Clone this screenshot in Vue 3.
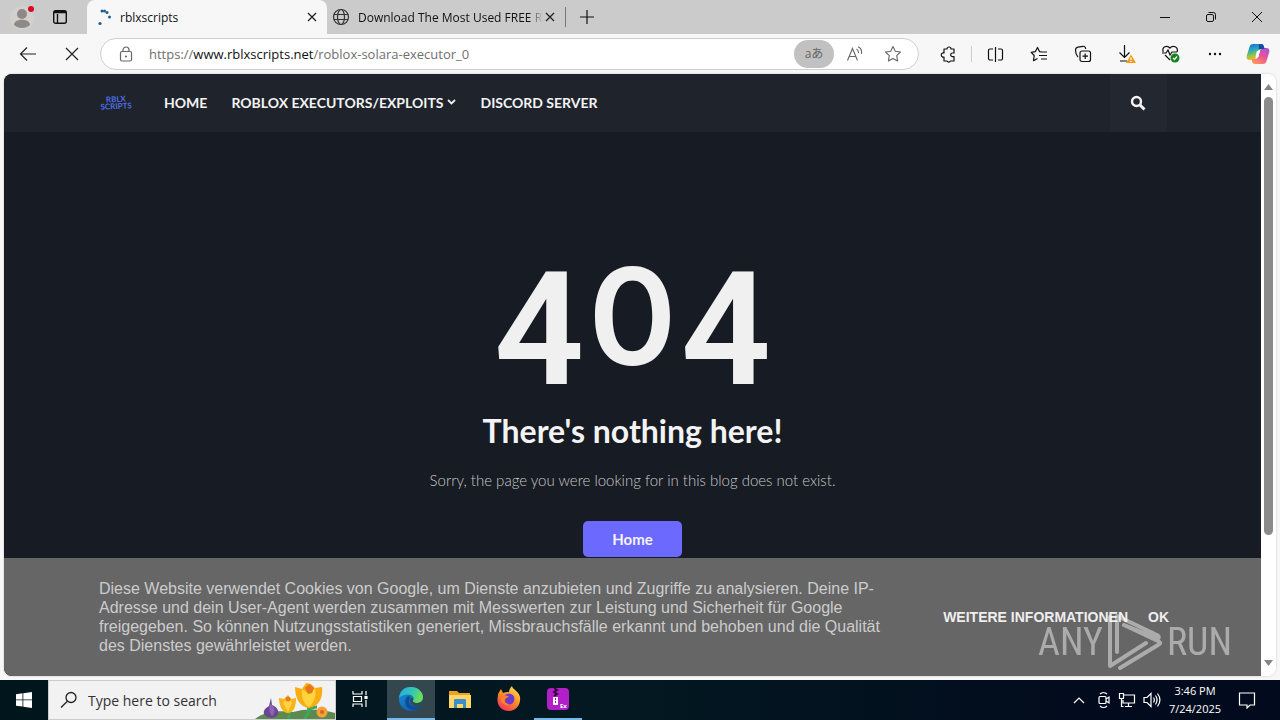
<script setup>
import { ref } from 'vue'

const address = ref('https://www.rblxscripts.net/roblox-solara-executor_0')
const query = ref('')
</script>

<template>
  <div class="desktop">
    <header class="tabs">
      <button class="profile" aria-label="Profile">
        <svg width="26" height="26" viewBox="0 0 26 26">
          <circle cx="13" cy="14" r="12" fill="#d3d0ce" />
          <circle cx="13" cy="10" r="5" fill="#8c8986" />
          <path d="M5 21c0-7 16-7 16 0-4 4-12 4-16 0z" fill="#8c8986" />
          <circle cx="22" cy="5" r="3" fill="#d60b20" />
        </svg>
      </button>
      <button class="workspaces" aria-label="Tab actions">
        <svg width="16" height="16" viewBox="0 0 16 16" fill="none" stroke="#111" stroke-width="1.4">
          <rect x="1.700" y="1.700" width="12.600" height="12.600" rx="2" />
          <path d="M2 3.500h12M5.500 5v9" />
          <path d="M2 2.600h12" stroke-width="2" />
        </svg>
      </button>
      <div class="tab active">
        <svg width="18" height="18" viewBox="0 0 18 18" fill="#1d5f91">
          <circle cx="8" cy="3" r="1.500" /><circle cx="10.500" cy="3" r="1.500" /><circle cx="13" cy="4.500" r="1.500" />
          <circle cx="15.500" cy="9" r="1.500" /><circle cx="6" cy="15.500" r="1.600" />
        </svg>
        <span class="tab-title">rblxscripts</span>
        <button class="tab-close" aria-label="Close tab">
          <svg width="10" height="10" viewBox="0 0 10 10" stroke="#222" stroke-width="1.300"><path d="M1 1l8 8M9 1l-8 8" /></svg>
        </button>
      </div>
      <div class="tab other">
        <svg width="18" height="18" viewBox="0 0 18 18" fill="none" stroke="#333" stroke-width="1.200">
          <circle cx="9" cy="9" r="7.500" /><ellipse cx="9" cy="9" rx="3.500" ry="7.500" /><path d="M2 6.500h14M2 11.500h14" />
        </svg>
        <span class="tab-title fade">Download The Most Used FREE R</span>
        <button class="tab-close" aria-label="Close tab">
          <svg width="10" height="10" viewBox="0 0 10 10" stroke="#222" stroke-width="1.300"><path d="M1 1l8 8M9 1l-8 8" /></svg>
        </button>
      </div>
      <button class="new-tab" aria-label="New tab">
        <svg width="14" height="14" viewBox="0 0 14 14" stroke="#111" stroke-width="1.200"><path d="M7 0v14M0 7h14" /></svg>
      </button>
      <div class="window-buttons">
        <button aria-label="Minimize"><svg width="12" height="12" viewBox="0 0 12 12" stroke="#111"><path d="M1 6.500h10" /></svg></button>
        <button aria-label="Restore">
          <svg width="12" height="12" viewBox="0 0 12 12" fill="none" stroke="#111">
            <rect x="1.500" y="3.500" width="7" height="7" rx="1.500" /><path d="M3.500 1.500h5a2 2 0 0 1 2 2v5" />
          </svg>
        </button>
        <button aria-label="Close"><svg width="12" height="12" viewBox="0 0 12 12" stroke="#111"><path d="M1 1l10 10M11 1L1 11" /></svg></button>
      </div>
    </header>

    <div class="toolbar">
      <button class="tool" aria-label="Back">
        <svg width="18" height="16" viewBox="0 0 18 16" fill="none" stroke="#222" stroke-width="1.200"><path d="M17 8H2M8 1.500L1.500 8 8 14.500" /></svg>
      </button>
      <button class="tool stop" aria-label="Stop">
        <svg width="14" height="14" viewBox="0 0 14 14" stroke="#222" stroke-width="1.200"><path d="M1 1l12 12M13 1L1 13" /></svg>
      </button>
      <div class="address">
        <svg width="14" height="16" viewBox="0 0 14 16" fill="none" stroke="#666" stroke-width="1.200">
          <rect x="1.500" y="5.500" width="11" height="9.500" rx="1.500" /><path d="M4 5.500V4a3 3 0 0 1 6 0v1.500" /><circle cx="7" cy="10.500" r=".5" fill="#666" />
        </svg>
        <label class="url">
          <span class="url-text" aria-hidden="true">https://<b>www.rblxscripts.net</b>/roblox-solara-executor_0</span>
          <input v-model="address" type="text" aria-label="Address" />
        </label>
        <button class="translate" aria-label="Translate">aあ</button>
        <button class="tool" aria-label="Read aloud">
          <svg width="18" height="16" viewBox="0 0 18 16" fill="none" stroke="#666" stroke-width="1.100">
            <path d="M1.500 14.500L6.500 2.500l5 12M3 10.500h7M10.500 3c1.500.8 2 2 2 4M12 .800c3 1.200 4 4 3.500 7" />
          </svg>
        </button>
        <button class="tool" aria-label="Add to favorites">
          <svg width="18" height="18" viewBox="0 0 18 18" fill="none" stroke="#666" stroke-width="1.100" stroke-linejoin="round">
            <path d="M9 1.500l2.300 4.800 5.200.7-3.800 3.600.9 5.300L9 13.400l-4.600 2.500.9-5.300L1.500 7l5.200-.7z" />
          </svg>
        </button>
      </div>
      <nav class="tools" aria-label="Browser tools">
        <button class="tool" aria-label="Extensions">
          <svg width="17" height="17" viewBox="0 0 17 17" fill="none" stroke="#111" stroke-width="1.200" stroke-linejoin="round">
            <path d="M4 3h3a2 2 0 0 1 4 0h3v4h-1.500a1.800 1.800 0 0 0 0 3.600H14V15h-3.500a2 2 0 0 1-3.500 0H4v-4a2.100 2.100 0 1 1 0-4z" />
          </svg>
        </button>
        <i class="rule"></i>
        <button class="tool" aria-label="Split screen">
          <svg width="17" height="17" viewBox="0 0 17 17" fill="none" stroke="#111" stroke-width="1.200">
            <path d="M6 3H3a1.500 1.500 0 0 0-1.500 1.500v8A1.500 1.500 0 0 0 3 14h3M11 3h3a1.500 1.500 0 0 1 1.500 1.500v8A1.500 1.500 0 0 1 14 14h-3M8.500 1v15" />
          </svg>
        </button>
        <button class="tool" aria-label="Favorites">
          <svg width="18" height="17" viewBox="0 0 18 17" fill="none" stroke="#111" stroke-width="1.200" stroke-linejoin="round">
            <path d="M12 6l-2.500-.4L7.500 1.500 5.400 5.600 1.200 6.400l3 3.100-.7 5.200 4-2.200M11 6h6M9 9.500h8M11 13h6" />
          </svg>
        </button>
        <button class="tool" aria-label="Collections">
          <svg width="18" height="18" viewBox="0 0 18 18" fill="none" stroke="#111" stroke-width="1.200">
            <rect x="6" y="6" width="10.500" height="10.500" rx="2" /><path d="M11.200 8.500v5.500M8.500 11.200H14M4 12C2 10 1.500 7 1.500 5c0-2 1-2.500 2.500-2.800l5-.9c1.500-.2 2.500.7 2.700 2.700" />
          </svg>
        </button>
        <button class="tool" aria-label="Downloads">
          <svg width="20" height="20" viewBox="0 0 20 20" fill="none" stroke="#111" stroke-width="1.200">
            <path d="M7.500 1v12M2.500 8.500l5 5 5-5M3 17h7" />
            <path d="M14 10.500l5 8.500H9z" fill="#f59b14" stroke="none" /><path d="M14 13.500v2.700M14 17v1" stroke="#fff" />
          </svg>
        </button>
        <button class="tool" aria-label="Browser essentials">
          <svg width="20" height="20" viewBox="0 0 20 20" fill="none" stroke="#111" stroke-width="1.200">
            <path d="M2.200 8C.5 3 6 .5 9 4c3-3.500 8.500-1 7.200 4M1 9h4l2-3 2 5 2-3h5M4 11l5 5" />
            <circle cx="14" cy="14" r="4.500" fill="#15831f" stroke="none" /><path d="M12 14l1.500 1.500 2.500-3" stroke="#fff" />
          </svg>
        </button>
        <button class="tool" aria-label="Settings and more">
          <svg width="16" height="4" viewBox="0 0 16 4" fill="#111"><circle cx="3" cy="2" r="1.200" /><circle cx="8" cy="2" r="1.200" /><circle cx="13" cy="2" r="1.200" /></svg>
        </button>
        <button class="tool copilot" aria-label="Copilot">
          <svg width="24" height="22" viewBox="0 0 24 22">
            <defs>
              <linearGradient id="cpA" x2="0.300" y2="1"><stop stop-color="#1767d7" /><stop offset=".45" stop-color="#28aeba" /><stop offset=".75" stop-color="#9ac53d" /><stop offset="1" stop-color="#f4bd22" /></linearGradient>
              <linearGradient id="cpB" x1="1" x2="0.300" y2="1"><stop stop-color="#9d58dc" /><stop offset=".5" stop-color="#e6519c" /><stop offset="1" stop-color="#ff935e" /></linearGradient>
            </defs>
            <path d="M7 1h8c2 0 2.500 1 3 3l.6 2H15c-2 0-3 1-3.500 3L10 14c-.5 2-1.500 3-3 3H4c-3 0-4-2-3-5L3.500 4C4 2 5 1 7 1z" fill="url(#cpA)" />
            <path d="M17 21H9c-2 0-2.500-1-3-3l-.5-2H9c2 0 3-1 3.500-3L14 8c.5-2 1.500-3 3-3h3c3 0 4 2 3 5l-2.500 8c-.5 2-1.500 3-3.500 3z" fill="url(#cpB)" />
            <path d="M13 1h2c2 0 2.500 1 3 3l.6 2H15c-1 0-1.700.3-2.200 1z" fill="#124ba4" />
            <path d="M10.800 8h3l-1.600 6H9.500z" fill="#fff" />
          </svg>
        </button>
      </nav>
    </div>

    <div class="frame">
      <div class="viewport">
        <div class="site-header">
          <div class="site-inner">
            <a class="logo" href="#"><span>RBLX</span><span>SCRIPTS</span></a>
            <nav class="menu" aria-label="Main">
              <a href="#">HOME</a>
              <a href="#">ROBLOX EXECUTORS/EXPLOITS
                <svg width="9" height="6" viewBox="0 0 9 6" fill="none" stroke="#eee" stroke-width="1.800"><path d="M1 1l3.500 3.500L8 1" /></svg>
              </a>
              <a href="#">DISCORD SERVER</a>
            </nav>
            <button class="search" aria-label="Search">
              <svg width="16" height="16" viewBox="0 0 16 16" fill="none" stroke="#f3f3f3"><circle cx="6.500" cy="6.500" r="4.500" stroke-width="2.400" /><path d="M10 10l4.500 4.500" stroke-width="3" /></svg>
            </button>
          </div>
        </div>
        <main class="error">
          <h1 class="code"><span>4</span><span class="zero">0</span><span>4</span></h1>
          <h2>There's nothing here!</h2>
          <p>Sorry, the page you were looking for in this blog does not exist.</p>
          <a class="home" href="#">Home</a>
        </main>
        <section class="cookies" aria-label="Cookies">
          <p>Diese Website verwendet Cookies von Google, um Dienste anzubieten und Zugriffe zu analysieren. Deine IP-Adresse und dein User-Agent werden zusammen mit Messwerten zur Leistung und Sicherheit für Google freigegeben. So können Nutzungsstatistiken generiert, Missbrauchsfälle erkannt und behoben und die Qualität des Dienstes gewährleistet werden.</p>
          <div class="cookie-links"><a href="#">WEITERE INFORMATIONEN</a><a href="#">OK</a></div>
        </section>
      </div>
      <div class="scrollbar">
        <svg width="9" height="6" viewBox="0 0 9 6" fill="#858585"><path d="M0 6l4.500-6L9 6z" /></svg>
        <i class="thumb"></i>
        <svg width="9" height="6" viewBox="0 0 9 6" fill="#858585"><path d="M0 0l4.500 6L9 0z" /></svg>
      </div>
    </div>

    <div class="watermark">
      <span>ANY</span>
      <svg width="56" height="60" viewBox="0 0 56 60" fill="none" stroke="#fff" stroke-width="4" stroke-linecap="round" stroke-linejoin="round">
        <path d="M10 40V4l40 19c3 2 2 4-1 3L17 13M3 5v49l36-23M17 13l34 16c3 1.500 3 2.500 0 4L13 56" />
      </svg>
      <span>RUN</span>
    </div>

    <footer class="taskbar">
      <button class="start" aria-label="Start">
        <svg width="16" height="16" viewBox="0 0 16 16" fill="#fff"><path d="M0 2.200l6.500-.9v6.200H0zM7.300 1.200L16 0v7.500H7.300zM0 8.300h6.500v6.300L0 13.700zM7.300 8.300H16V16l-8.700-1.200z" /></svg>
      </button>
      <label class="task-search">
        <svg width="18" height="18" viewBox="0 0 18 18" fill="none" stroke="#222" stroke-width="1.300"><circle cx="11" cy="6.500" r="5" /><path d="M7.400 10.200L1 16.500" /></svg>
        <input v-model="query" type="text" placeholder="Type here to search" aria-label="Search Windows" />
        <svg class="flowers" width="80" height="38" viewBox="0 0 80 38">
          <path d="M0 38c8-7 24-9 38-7 14-4 28-3 42 1v6z" fill="#5b8a4e" />
          <path d="M16 17l1 7c6 2 8 8 5 11-4 3-11 2-13-2-1-4 2-6 5-8z" fill="#6b4592" /><path d="M15 23c-1 5-1 9 2 12 4-3 3-8 0-11z" fill="#8c64b4" />
          <path d="M33 28c2 4 1 8 1 10M53 25c2 5 0 9-4 13M52 31c3-4 7-5 10-5" stroke="#3fa45c" stroke-width="3" fill="none" />
          <path d="M24 17l5 1 4-4 3 4 5-1c0 8-2 15-8 15-6 0-9-8-9-15z" fill="#f7b416" /><path d="M33 15l4 7-4 9-5-9z" fill="#ffd245" />
          <circle cx="33" cy="18" r="2.500" fill="#e9791f" />
          <path d="M40 6l7 2 4-6 5 1 4 4 7-1c1 8-1 19-13 21-10-1-14-11-14-21z" fill="#f8ae10" /><path d="M47 8l7 5 6-6c2 9-2 16-6 19-5-3-8-9-7-18z" fill="#ffd53e" />
          <path d="M50 7l4-4 5 4-2 5-4 1z" fill="#e8741e" />
          <circle cx="67" cy="31" r="5.500" fill="#f5a13a" /><circle cx="67" cy="31" r="2" fill="#d9641c" />
        </svg>
      </label>
      <button class="task" aria-label="Task view">
        <svg width="18" height="18" viewBox="0 0 18 18" fill="none" stroke="#fff" stroke-width="1.200">
          <path d="M2 1v3h9V1M2 17v-3h9v3M2.500 6.500h8v5h-8zM15 1v4M15 10v7" /><rect x="14" y="6.500" width="2" height="2" fill="#fff" />
        </svg>
      </button>
      <button class="task current" aria-label="Microsoft Edge">
        <svg width="26" height="26" viewBox="0 0 26 26">
          <defs>
            <linearGradient id="eg1" y2=".3"><stop stop-color="#27a8e5" /><stop offset=".6" stop-color="#32c8b4" /><stop offset="1" stop-color="#6ddc58" /></linearGradient>
            <linearGradient id="eg2" y2="1"><stop stop-color="#1693dc" /><stop offset="1" stop-color="#0d4da3" /></linearGradient>
          </defs>
          <circle cx="13" cy="13" r="12" fill="url(#eg2)" />
          <path d="M1 12C2 4 7 1 13 1c7 0 12 5 12 10 0 4-3 6-6 6-3 0-5-1-4-2.500 2-3-1-6-5-6-4 0-7 1.500-9 3.500z" fill="url(#eg1)" />
          <path d="M10 10c-4 3-4 10 2 13 4 2 8 1 11-3-6 2-12 0-12-5 0-2 1-3 1-4z" fill="#0f4c98" />
          <path d="M15 14c-1 2 1 3 4 3 2 0 4-1 5-2l1 3c-1 1-2 2-4 2-5 1-9-2-9-5 0-2 1-3 2-3 1 0 1.500 1 1 2z" fill="#35474f" />
        </svg>
      </button>
      <button class="task" aria-label="File Explorer">
        <svg width="24" height="22" viewBox="0 0 24 22">
          <path d="M1 3h8l2 2h11v14H1z" fill="#e9a323" /><path d="M1 7h22v13H1z" fill="#ffd767" />
          <path d="M6 12c0-1 1-1 1-1h10s1 0 1 1v8h-3v-4H9v4H6z" fill="#3c8dcc" />
        </svg>
      </button>
      <button class="task" aria-label="Firefox">
        <svg width="26" height="26" viewBox="0 0 26 26">
          <defs><linearGradient id="ff" x1=".8" x2=".2" y2="1"><stop stop-color="#ffe14a" /><stop offset=".5" stop-color="#ff8a25" /><stop offset="1" stop-color="#ef2d62" /></linearGradient></defs>
          <path d="M2 8l3-5 2 4c2-1 4-1 6-1 0-2 1-4 3-6 0 3 7 5 8 11 1 8-4 14-11 14S1 20 1.500 13c0-2 .5-3 .5-5z" fill="url(#ff)" />
          <circle cx="13" cy="13" r="5.500" fill="#7139c9" /><path d="M5 9c3-1 4 1 8 1-1 2-3 1-4 4-1 2 2 4 5 4-5 3-10-1-9-9z" fill="#ff8425" />
        </svg>
      </button>
      <button class="task open" aria-label="Archive tool">
        <svg width="24" height="24" viewBox="0 0 24 24">
          <rect x="1" y="1" width="22" height="22" rx="4" fill="#b21fc8" /><path d="M8 1l3 2-3 2 3 2-3 2" stroke="#33093c" stroke-width="2" fill="none" />
          <rect x="7" y="10" width="5" height="8" fill="#fff" /><path d="M9 12h1M9 15h1" stroke="#9410aa" stroke-width="2" />
          <text x="14" y="21" fill="#fff" font-size="6" font-weight="700">Ex</text>
        </svg>
      </button>
      <div class="tray">
        <svg width="12" height="8" viewBox="0 0 12 8" fill="none" stroke="#fff" stroke-width="1.200"><path d="M1 7l5-5 5 5" /></svg>
        <svg width="14" height="18" viewBox="0 0 14 18" fill="none" stroke="#fff" stroke-width="1.200"><rect x="2" y="5.500" width="7" height="7" rx="1" /><path d="M9 8l3-2v6l-3-2M3 3c2-2 5-2 7 0M3 15c2 2 5 2 7 0" /></svg>
        <svg width="18" height="16" viewBox="0 0 18 16" fill="none" stroke="#fff" stroke-width="1.200"><path d="M6 3h10.500v8H5V8M10.500 11v3M7 14.500h7M1.500 1.500h4v5h-4zM3.500 6.500v8h2" /></svg>
        <svg width="18" height="16" viewBox="0 0 18 16" fill="none" stroke="#fff" stroke-width="1.200"><path d="M1 5.500h3l4-4v13l-4-4H1zM10.500 5.500c1 1.500 1 3.500 0 5M12.500 3.500c2 3 2 6 0 9M14.500 1.500c3 4 3 9 0 13" /></svg>
        <time class="clock"><span>3:46 PM</span><span>7/24/2025</span></time>
        <svg class="note" width="18" height="18" viewBox="0 0 18 18" fill="none" stroke="#fff" stroke-width="1.200"><path d="M1.500 2h15v12H12l-3 3v-3H1.500z" /></svg>
      </div>
    </footer>
  </div>
</template>

<style>
body { margin: 0; }
</style>

<style scoped>
* { box-sizing: border-box; }
.desktop { position: relative; display: flex; flex-direction: column; height: 100vh; overflow: hidden; background: #f7f7f7; font-family: "Open Sans", "Noto Sans", "Noto Sans CJK JP", sans-serif; }
button { display: flex; align-items: center; justify-content: center; border: 0; padding: 0; background: none; font: inherit; }
svg { display: block; flex: none; }
a { color: inherit; text-decoration: none; }
h1, h2, p { margin: 0; }

.tabs { display: flex; align-items: center; height: 34px; flex: none; padding-left: 9px; background: #cbcbcb; }
.workspaces { margin: 0 19px 0 17px; }
.tab { display: flex; align-items: center; height: 34px; font-size: 12px; color: #111; }
.active { width: 240px; padding: 0 9px 0 7px; border-radius: 8px 8px 0 0; background: #f7f7f7; }
.other { width: 238px; padding: 0 9px 0 5px; }
.tab-title { flex: 1; margin: 0 1px 0 8px; overflow: hidden; white-space: nowrap; }
.fade { mask-image: linear-gradient(90deg, #000 92%, transparent); }
.tab-close { width: 12px; height: 20px; }
.new-tab { height: 20px; padding: 0 14px; border-left: 1px solid #777; }
.window-buttons { display: flex; margin-left: auto; }
.window-buttons button { width: 46px; height: 34px; }

.toolbar { display: flex; align-items: center; height: 40px; flex: none; padding-left: 11px; }
.tool { width: 34px; height: 30px; flex: none; }
.stop { margin: 0 11px 0 10px; }
.address { display: flex; align-items: center; flex: 1; height: 32px; padding: 0 8px 0 18px; gap: 4px; border: 1px solid #cfcfcf; border-radius: 16px; background: #fff; }
.url { position: relative; flex: 1; margin-left: 12px; font-size: 13px; color: #707070; line-height: 20px; }
.url-text { white-space: nowrap; }
.url b { font-weight: 400; color: #111; }
.url input { position: absolute; inset: 0; width: 100%; border: 0; padding: 0; background: none; font: inherit; color: transparent; }
.translate { width: 40px; height: 28px; border-radius: 14px; background: #c1c1c1; color: #666; font-size: 12px; line-height: 16px; }
.tools { display: flex; align-items: center; gap: 10px; padding: 0 5px 0 12px; }
.rule { width: 1px; height: 16px; margin: 0 -4px 0 -4px; background: #ccc; }
.copilot { margin-left: -1px; }

.frame { display: flex; flex: 1; min-height: 0; margin: 0 4px 4px; overflow: hidden; border-radius: 8px; background: #fff; box-shadow: 0 0 2px #bbb; }
.viewport { display: flex; flex-direction: column; flex: 1; background: #171b23; color: #f3f3f3; font-family: Lato, sans-serif; }
.site-header { flex: none; height: 58px; padding: 0 94px; background: #1f232b; }
.site-inner { display: flex; align-items: center; height: 58px; }
.logo { display: flex; flex-direction: column; align-items: center; width: 36px; color: #4d6de3; font-size: 8px; line-height: 7px; font-weight: 700; transform: rotate(-3deg); }
.menu { display: flex; gap: 24px; margin-left: 30px; padding-bottom: 2px; font-size: 14px; font-weight: 700; }
.menu a { display: flex; align-items: center; gap: 4px; white-space: nowrap; }
.search { width: 57px; height: 58px; margin-left: auto; padding-right: 2px; background: #23272f; }
.error { display: flex; flex-direction: column; align-items: center; flex: 1; min-height: 0; }
.code { display: flex; align-items: flex-end; gap: 4px; margin-top: 120px; height: 156px; font-family: Roboto, sans-serif; font-size: 158px; line-height: 156px; font-weight: 600; color: #f0f0f0; }
.zero { font-family: Inter, sans-serif; font-size: 134px; font-weight: 600; line-height: 184px; }
.error h2 { margin-top: 3px; font-size: 32px; line-height: 40px; font-weight: 700; }
.error p { margin-top: 18px; font-size: 15px; line-height: 22px; font-weight: 300; color: #c8c8c8; }
.home { margin-top: 30px; padding: 0 29px; border-radius: 5px; background: #6c69ff; font-size: 15px; line-height: 36px; font-weight: 700; }
.cookies { display: flex; align-items: center; flex: none; height: 118px; padding: 0 92px 1px 95px; background: #666; font-family: "Liberation Sans", Arial, sans-serif; }
.cookies p { flex: 1; max-width: 790px; font-size: 16px; line-height: 19px; color: #ccc; }
.cookie-links { display: flex; gap: 20px; margin-left: auto; font-size: 14px; font-weight: 700; color: #eee; white-space: nowrap; }
.scrollbar { display: flex; flex-direction: column; align-items: center; width: 15px; padding: 10px 0; background: #fff; }
.thumb { width: 9px; height: 438px; margin: 7px 0 auto; border-radius: 5px; background: #8b8b8b; }

.watermark { position: absolute; right: 48px; bottom: 48px; display: flex; align-items: center; gap: 4px; color: #fff; opacity: .45; font-family: "Roboto Condensed", "Liberation Sans Narrow", "Open Sans", sans-serif; font-size: 38px; font-weight: 400; line-height: 60px; pointer-events: none; }

.taskbar { display: flex; flex: none; height: 40px; background: linear-gradient(90deg, #00161d, #031821 50%, #020b1d 85%); color: #fff; }
.start { width: 48px; }
.task-search { display: flex; align-items: center; width: 288px; padding-left: 11px; border: 1px solid #ccc; background: #f2f2f2; }
.task-search input { flex: 1; min-width: 0; margin-left: 10px; padding: 0; border: 0; background: none; font: inherit; font-size: 14px; color: #333; }
.task-search input::placeholder { color: #333; opacity: 1; }
.flowers { align-self: flex-end; }
.task { width: 48px; margin-right: 1px; border-bottom: 2px solid transparent; }
.current { margin-left: 2px; border-color: #76b9ed; background: #34474f; }
.open { border-color: #76b9ed; }
.tray { display: flex; align-items: center; gap: 7px; margin-left: auto; padding-right: 24px; }
.tray > svg:first-child { margin-right: 5px; }
.clock { display: flex; flex-direction: column; align-items: center; width: 54px; font-size: 11px; line-height: 18px; white-space: nowrap; }
.note { margin-left: 9px; }
</style>
